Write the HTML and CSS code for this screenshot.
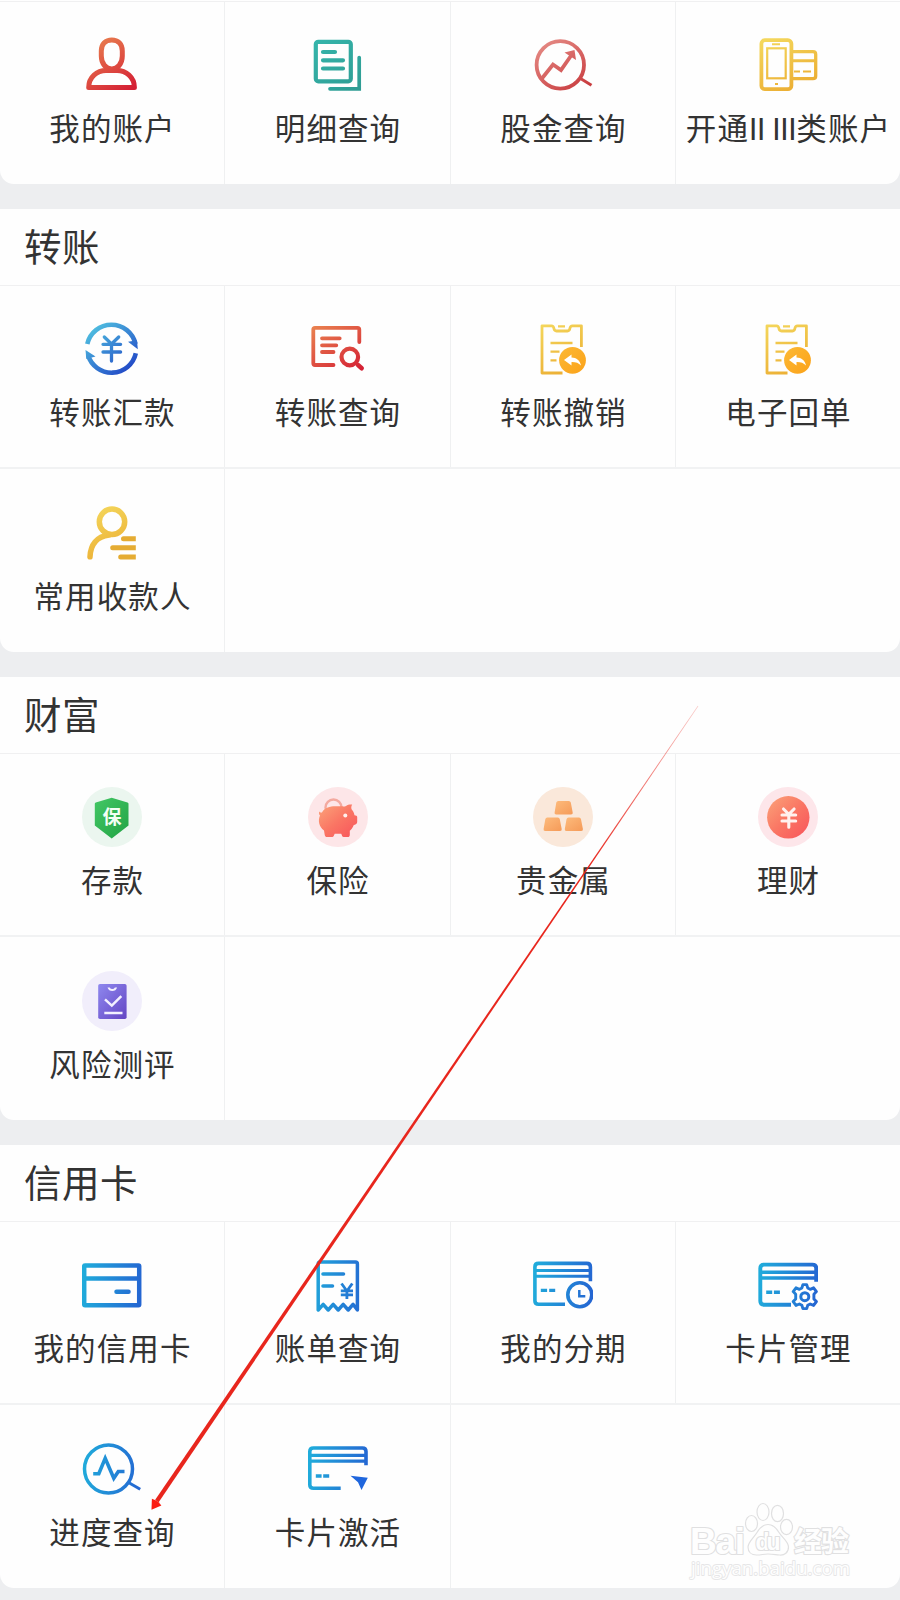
FILE: index.html
```html
<!DOCTYPE html>
<html lang="zh-CN">
<head>
<meta charset="utf-8">
<title>全部功能</title>
<link rel="stylesheet" href="styles.css">
</head>
<body>
<svg class="defs" width="0" height="0" aria-hidden="true">
  <defs>
    <linearGradient id="red" gradientUnits="userSpaceOnUse" x1="12" y1="4" x2="46" y2="56"><stop offset="0" stop-color="#e9804f"/><stop offset="1" stop-color="#d41f34"/></linearGradient>
    <linearGradient id="teal" gradientUnits="userSpaceOnUse" x1="8" y1="4" x2="50" y2="56"><stop offset="0" stop-color="#35b5ab"/><stop offset="1" stop-color="#2f9c93"/></linearGradient>
    <linearGradient id="rose" gradientUnits="userSpaceOnUse" x1="10" y1="4" x2="46" y2="56"><stop offset="0" stop-color="#e58c86"/><stop offset="1" stop-color="#c93d40"/></linearGradient>
    <linearGradient id="gold" gradientUnits="userSpaceOnUse" x1="15" y1="2" x2="40" y2="58"><stop offset="0" stop-color="#f4d75c"/><stop offset="1" stop-color="#ebab30"/></linearGradient>
    <linearGradient id="royal" gradientUnits="userSpaceOnUse" x1="8" y1="10" x2="46" y2="54"><stop offset="0" stop-color="#4fbfe0"/><stop offset="1" stop-color="#2147c6"/></linearGradient>
    <linearGradient id="blue" gradientUnits="userSpaceOnUse" x1="0" y1="28" x2="60" y2="34"><stop offset="0" stop-color="#20acdb"/><stop offset="1" stop-color="#2465d2"/></linearGradient>
    <linearGradient id="green" x1="0" y1="0" x2="1" y2="1"><stop offset="0" stop-color="#43c765"/><stop offset="1" stop-color="#22a344"/></linearGradient>
    <linearGradient id="coral" x1="0" y1="0" x2="1" y2="1"><stop offset="0" stop-color="#fba47a"/><stop offset=".5" stop-color="#fa7664"/><stop offset="1" stop-color="#f8535b"/></linearGradient>
    <linearGradient id="amber" x1="0" y1="0" x2="1" y2="1"><stop offset="0" stop-color="#fdbb7c"/><stop offset="1" stop-color="#f59a58"/></linearGradient>
    <linearGradient id="violet" x1="0" y1="0" x2="1" y2="1"><stop offset="0" stop-color="#8e88ee"/><stop offset="1" stop-color="#6445c4"/></linearGradient>
    <linearGradient id="orange" x1="0" y1="0" x2="1" y2="1"><stop offset="0" stop-color="#fcb935"/><stop offset="1" stop-color="#fba219"/></linearGradient>
    <linearGradient id="trail" gradientUnits="userSpaceOnUse" x1="698" y1="706" x2="590" y2="865"><stop offset="0" stop-color="#e8261d" stop-opacity=".25"/><stop offset="1" stop-color="#e8261d"/></linearGradient>
    <g id="undo-sheet">
      <g fill="none" stroke="url(#gold)" stroke-width="2.800" stroke-linejoin="round">
        <path d="M29.500 54H9V6.800h9.500q2 0 2.400 2.600t2.600 2.600h11q2 0 2.400-2.600t2.600-2.600h8.900V28"/>
        <path d="M25 7.300h7M17.500 24h22M17.500 32.700h9M17.500 41.300h6" stroke-width="2.300"/>
      </g>
      <circle cx="39.500" cy="41.300" r="13.400" fill="url(#orange)"/>
      <path d="M31 41l7.500-5.600v3.200c5 .2 8.600 2.900 9.500 8-2.500-2.600-5.300-3.600-9.500-3.500v3.500z" fill="#fff"/>
    </g>
  </defs>
</svg>

<main class="page">
  <section class="card card-top">
    <div class="grid">
      <a class="cell"><svg class="icon" viewBox="0 0 60 60"><g fill="none" stroke="url(#red)" stroke-width="5" stroke-linejoin="round"><path d="M29.800 5C36 5 40.300 9 40.300 16v5c0 8-5 13-10.500 13s-10.500-5-10.500-13v-5C19.300 9 23.600 5 29.800 5z"/><path d="M6.700 52.500h45.700C52.400 42 44 35.500 35 35.500H24C15 35.500 6.700 42 6.700 52.500z"/></g></svg><span class="label">我的账户</span></a>
      <a class="cell"><svg class="icon" viewBox="0 0 60 60"><g fill="none" stroke="url(#teal)" stroke-width="4.200"><rect x="7.800" y="6.800" width="35" height="39.500" rx="2.500"/><path d="M15 17h12M15 25.300h20M15 33.500h20" stroke-linecap="round"/><path d="M51.200 22.500v31.300H22" stroke-width="3.700" stroke-linecap="round"/></g></svg><span class="label">明细查询</span></a>
      <a class="cell"><svg class="icon" viewBox="0 0 60 60"><g fill="none" stroke="url(#rose)" stroke-width="4"><circle cx="27.300" cy="29.900" r="23.700" stroke-width="3.800"/><path d="M47.500 43.500l11 6.800" stroke-width="3"/><path d="M8.500 44L20 29.500l8 5.500L38.500 20" stroke-width="3.800"/></g><path d="M31.500 17.500l10-2.500 1.500 10z" fill="url(#rose)"/></svg><span class="label">股金查询</span></a>
      <a class="cell"><svg class="icon" viewBox="0 0 60 60"><g fill="none" stroke="url(#gold)" stroke-width="3.800"><rect x="3.400" y="5.200" width="30" height="49" rx="3.500"/><rect x="9.200" y="13.300" width="18.500" height="30" stroke-width="2.200"/><path d="M35 16.600h20q2.700 0 2.700 2.700V41q0 2.700-2.700 2.700H35" stroke-width="3.300"/><path d="M35 25.800h22" stroke-width="3"/><path d="M36 36.500h6M45 36.500h8" stroke-width="2"/><path d="M14 9.300h8M17 49h3" stroke-width="2"/></g></svg><span class="label">开通<span class="roman">II III</span>类账户</span></a>
    </div>
  </section>

  <section class="card">
    <h2 class="title">转账</h2>
    <div class="grid">
      <a class="cell"><svg class="icon" viewBox="0 0 60 60"><g fill="none" stroke="url(#royal)" stroke-width="4.600"><path d="M5.300 25A24.700 24.700 0 0 1 53.500 25"/><path d="M53.800 34.300A24.700 24.700 0 0 1 6 36"/><path d="M22.300 18l7.200 7 7.200-7M21 25.300h17.600M21 33h17.600M29.500 25v17" stroke-width="3.300" stroke-linecap="round"/></g><path d="M46 22.700l9-1.500.8 9zM3.500 31l.8 9 9.200-2.500z" fill="url(#royal)"/></svg><span class="label">转账汇款</span></a>
      <a class="cell"><svg class="icon" viewBox="0 0 60 60"><g fill="none" stroke="url(#red)" stroke-width="3.800" stroke-linecap="round" stroke-linejoin="round"><path d="M25.500 46H7Q5.300 46 5.300 44.300V10.500Q5.300 8.800 7 8.800h42.500q1.800 0 1.800 1.700v12.500"/><path d="M14 19.300h17.700M14 26.300h14.300M14 33h11.500"/><circle cx="41.800" cy="38" r="8.300" stroke-width="4.200"/><path d="M50 46l3.700 3.300" stroke-width="4.500"/></g></svg><span class="label">转账查询</span></a>
      <a class="cell"><svg class="icon" viewBox="0 0 60 60"><use href="#undo-sheet"/></svg><span class="label">转账撤销</span></a>
      <a class="cell"><svg class="icon" viewBox="0 0 60 60"><use href="#undo-sheet"/></svg><span class="label">电子回单</span></a>
    </div>
    <div class="grid grid-last">
      <a class="cell"><svg class="icon" viewBox="0 0 60 60"><g fill="none" stroke="url(#gold)" stroke-width="5.500"><circle cx="30" cy="18.800" r="12.700"/><path d="M8 53.800C8.500 42 14.500 33.500 27 32" stroke-linecap="round"/></g><path d="M41.500 33.200h12.300v5H41.500a2.500 2.500 0 0 1 0-5zM30.700 42.200h23.100v5H30.700a2.500 2.500 0 0 1 0-5zM38.700 51.500h15.100v5H38.700a2.500 2.500 0 0 1 0-5z" fill="#e5ac33"/></svg><span class="label">常用收款人</span></a>
      <div class="blank"></div>
    </div>
  </section>

  <section class="card">
    <h2 class="title">财富</h2>
    <div class="grid">
      <a class="cell"><svg class="icon" viewBox="0 0 60 60"><circle cx="30" cy="30" r="30" fill="#ebf6ef"/><path d="M29.700 10.700L45.500 15.500q1 .3 1 1.300V38.500L29.700 51.600 12.800 38.500V16.800q0-1 1-1.300z" fill="url(#green)"/><text class="badge-char" x="30" y="36.800">保</text></svg><span class="label">存款</span></a>
      <a class="cell"><svg class="icon" viewBox="0 0 60 60"><circle cx="30" cy="30" r="30" fill="#fde6e8"/><circle cx="25.500" cy="20.500" r="8" fill="none" stroke="#f3aaa0" stroke-width="2.400"/><path d="M11.300 24.500c.9 1.200 1.800 1.400 2.800.8C17 20.500 22 19.300 27 19.300h6.500c1.800.3 3.300.2 4.500-.4 1.600-1 3.500-1.500 6.200-1.300-1 1.800-1.200 3.200-.5 5 1.500 1.700 2.300 3.400 2.800 5.600 1.500.3 2.700.6 2.700 1.800V35c0 2-1.800 2.500-3.400 3.100-1 2.700-2.500 4.400-4 5.700v4c0 1.700-.8 2.300-2 2.300h-4.200c-1.400 0-1.700-2-2.400-3.300h-6.500c-.9 1.500-1 3.300-2.500 3.300H19c-1.300 0-2-.8-2.300-2.300L16 43.500c-5-3.800-6.300-9.800-4-15-1-.8-1.300-2.300-.7-4z" fill="url(#coral)"/><circle cx="37.300" cy="28.500" r="2" fill="#fff0ed"/></svg><span class="label">保险</span></a>
      <a class="cell"><svg class="icon" viewBox="0 0 60 60"><circle cx="30" cy="30" r="30" fill="#fae8da"/><g fill="url(#amber)"><path id="ingot" d="M25.300 14h10.500q1.600 0 2 1.600L39.700 25.500q.4 2-1.700 2H23.200q-2 0-1.600-2L23.300 15.600q.4-1.600 2-1.600z"/><use href="#ingot" x="-11" y="16.600"/><use href="#ingot" x="10.200" y="16.600"/></g></svg><span class="label">贵金属</span></a>
      <a class="cell"><svg class="icon" viewBox="0 0 60 60"><circle cx="30" cy="30" r="30" fill="#fde6ea"/><circle cx="30.300" cy="30.300" r="21.200" fill="url(#coral)"/><path d="M25.500 22l5.300 5.300 5.300-5.300M24 28h13.700M24 34h13.700M30.800 27.500v12.800" fill="none" stroke="#fff1ee" stroke-width="3.100" stroke-linecap="round"/></svg><span class="label">理财</span></a>
    </div>
    <div class="grid grid-last">
      <a class="cell"><svg class="icon" viewBox="0 0 60 60"><circle cx="30" cy="30" r="30" fill="#f1eefb"/><rect x="16.200" y="13" width="28.400" height="35" rx="1.800" fill="url(#violet)"/><path d="M25.500 16.500h2.200q.8 1.500 2.600 1.500t2.600-1.500h2.200q-1.200 3.500-4.800 3.500t-4.800-3.500z" fill="#f3f0ff"/><path d="M23 28.400l6.800 6.200 9.500-9.500M22.300 42h18.200" fill="none" stroke="#f3f0ff" stroke-width="2.500"/></svg><span class="label">风险测评</span></a>
      <div class="blank"></div>
    </div>
  </section>

  <section class="card">
    <h2 class="title">信用卡</h2>
    <div class="grid">
      <a class="cell"><svg class="icon" viewBox="0 0 60 60"><g fill="none" stroke="url(#blue)" stroke-width="4.500"><rect x="2.200" y="10.500" width="55" height="39.800" rx=".8"/><path d="M2 23.500h55"/><path d="M34.500 36.800h12" stroke-linecap="round"/></g></svg><span class="label">我的信用卡</span></a>
      <a class="cell"><svg class="icon" viewBox="0 0 60 60"><g fill="none" stroke="url(#blue)" stroke-width="3.500" stroke-linejoin="round"><path d="M10.200 55V9q0-2 2-2h35.200q2 0 2 2v46l-4.400-5.700-4.800 5.700-5-5.700-5 5.700-5-5.700-5 5.700-5-5.700z"/><path d="M15 19h20.500M15 31h9.500" stroke-width="3.600" stroke-linecap="round"/><path d="M33.500 28.500l5.400 7.500 5.400-7.500M32.800 35.800h12.200M32.800 39.800h12.200M38.900 35.500v8.500" stroke-width="2.800"/></g></svg><span class="label">账单查询</span></a>
      <a class="cell"><svg class="icon" viewBox="0 0 60 60"><g fill="none" stroke="url(#blue)" stroke-width="3.600"><path d="M32 49.300H5.500Q1.900 49.300 1.900 45.700V12Q1.900 8.400 5.500 8.400h48.300q3.600 0 3.600 3.600v14.200"/><path d="M2 15.500h55.500M2 21.300h55.500" stroke-width="2.900"/><path d="M7.800 35.400h6.300M16.200 35.400h6" stroke-width="3.400"/><circle cx="46.800" cy="39.700" r="12"/><path d="M46.300 35v6.200h6" stroke-width="2.500"/></g></svg><span class="label">我的分期</span></a>
      <a class="cell"><svg class="icon" viewBox="0 0 60 60"><g fill="none" stroke="url(#blue)" stroke-width="3.900"><path d="M33 49.800H6Q2.300 49.800 2.300 46.100V13.300Q2.300 9.600 6 9.600h48.500q3.700 0 3.700 3.700v13.500"/><path d="M2.500 17.300h55.500M2.500 23h55.500" stroke-width="3.500"/><path d="M8.200 37.300h6M15.900 37.300h6" stroke-width="3.500"/><path d="M44.900 29.600h3.800l1 3.300 2.500 1.400 3.400-1.500 2.800 3.800-2.500 2.600v4.800l2.500 2.600-2.800 3.800-3.400-1.400-2.500 1.300-1 3.300h-3.800l-1-3.300-2.500-1.300-3.400 1.400-2.800-3.800 2.500-2.600v-4.800l-2.500-2.600 2.800-3.800 3.400 1.500 2.500-1.400z" stroke-width="2.900" stroke-linejoin="round"/><circle cx="46.800" cy="41.700" r="4" stroke-width="3"/></g></svg><span class="label">卡片管理</span></a>
    </div>
    <div class="grid grid-last">
      <a class="cell"><svg class="icon" viewBox="0 0 60 60"><g fill="none" stroke="url(#blue)" stroke-width="3.500"><circle cx="26.500" cy="30" r="24"/><path d="M46.500 43.500l11.700 6.700" stroke-width="3"/><path d="M11.200 34.800h5.600l6.400-15.500 8.600 20 4.500-6.800h6.200" stroke-width="3.600"/></g></svg><span class="label">进度查询</span></a>
      <a class="cell"><svg class="icon" viewBox="0 0 60 60"><g fill="none" stroke="url(#blue)" stroke-width="3.600"><path d="M32.700 49.300H5.400Q1.800 49.300 1.800 45.700V12.600Q1.800 9 5.400 9h49q3.600 0 3.600 3.600v13.600"/><path d="M2 16.300h56M2 22.200h56" stroke-width="3.200"/><path d="M7.800 37h5.800M15.200 37h6" stroke-width="3.500"/></g><path d="M42.500 36.700l17.300 2L53.500 51 50 43.300z" fill="#1f66dd"/></svg><span class="label">卡片激活</span></a>
      <div class="blank blank-half"></div>
    </div>
  </section>
</main>

<svg class="overlay" viewBox="0 0 900 1600" width="900" height="1600">
  <path d="M698.300 706.200L158.500 1502.500 155.200 1499.700 697.800 705.800z" fill="url(#trail)"/>
  <path d="M151.500 1509.700l.4-10.900 3.600 1.400 3.100 2 2.800 3.300z" fill="#fb1d12"/>
  <g class="mark">
    <text class="mark-brand" x="690" y="1554" textLength="55">Bai</text>
    <ellipse cx="751.500" cy="1523.500" rx="6" ry="8"/><ellipse cx="763" cy="1512" rx="6" ry="8.500"/><ellipse cx="777.500" cy="1513.500" rx="6" ry="8.200"/><ellipse cx="786.500" cy="1527" rx="6" ry="7.700"/>
    <path d="M768 1524.500c5 0 8 3 11 8s9.500 9 9.500 14.500-4 8.500-9 8-7-1-11.500-1-6.500 1-11.500 1-8.500-3-8.500-8 6-9.500 9-14.500 6-8 11-8z"/>
    <text class="mark-du" x="755.500" y="1549.500" textLength="25">du</text>
    <text class="mark-cn" x="794" y="1551.500" textLength="55">经验</text>
    <text class="mark-url" x="691" y="1575" textLength="159" lengthAdjust="spacingAndGlyphs">jingyan.baidu.com</text>
  </g>
</svg>
</body>
</html>
```
FILE: styles.css
```css
* { box-sizing: border-box; }

body {
  position: relative;
  margin: 0;
  width: 900px;
  height: 1600px;
  overflow: hidden;
  background: #edeef0;
  color: #333;
  font-family: "Noto Sans CJK SC", "Noto Sans", sans-serif;
}

.defs { position: absolute; }

.page {
  display: flex;
  flex-direction: column;
  gap: 25px;
}

.card {
  height: 443px;
  background: #fefefe;
  border-radius: 0 0 14px 14px;
  overflow: hidden;
}

.card-top {
  height: 184px;
  padding-top: 1px;
}

.title {
  height: 76px;
  margin: 0;
  padding-left: 24px;
  font-size: 37.500px;
  font-weight: 400;
  line-height: 71px;
  letter-spacing: .5px;
}

.grid {
  display: grid;
  grid-template-columns: 225px 226px 225px 224px;
  height: 182px;
  border-top: 1px solid #f0f0f1;
}

.card-top .grid { height: 183px; }

.grid-last {
  height: 185px;
  border-top: 2px solid #f1f2f3;
}

.cell {
  display: flex;
  flex-direction: column;
  align-items: center;
  padding-top: 33px;
  border-right: 1px solid #eff0f1;
}

.grid-last .cell { padding-top: 34px; }

.cell:nth-child(4) { border-right: 0; }

.blank { grid-column: span 3; }

.blank-half { grid-column: span 2; }

.icon {
  width: 60px;
  height: 60px;
  flex: none;
}

.label {
  margin-top: 14px;
  padding-left: 1px;
  font-size: 30.500px;
  line-height: 36px;
  letter-spacing: 1.100px;
  white-space: nowrap;
}

.roman {
  font-family: Roboto, sans-serif;
  letter-spacing: -.3px;
}

.badge-char {
  font-size: 19px;
  font-weight: 700;
  fill: #f3fff5;
  text-anchor: middle;
}

.overlay {
  position: absolute;
  top: 0;
  left: 0;
  pointer-events: none;
}

.mark {
  fill: #fefefe;
  stroke: #e0e0e1;
  stroke-width: 1.200px;
}

.mark text {
  stroke-width: 2.200px;
  paint-order: stroke;
  stroke-linejoin: round;
}

.mark-brand {
  font: 700 37px "Liberation Sans", sans-serif;
}

.mark-du {
  font: 700 23px "Liberation Sans", sans-serif;
}

.mark-cn {
  font-size: 28px;
  font-weight: 700;
}

.mark .mark-url {
  font: 400 19px "Open Sans", sans-serif;
  stroke: #e6e6e7;
  stroke-width: 1.800px;
}
```
